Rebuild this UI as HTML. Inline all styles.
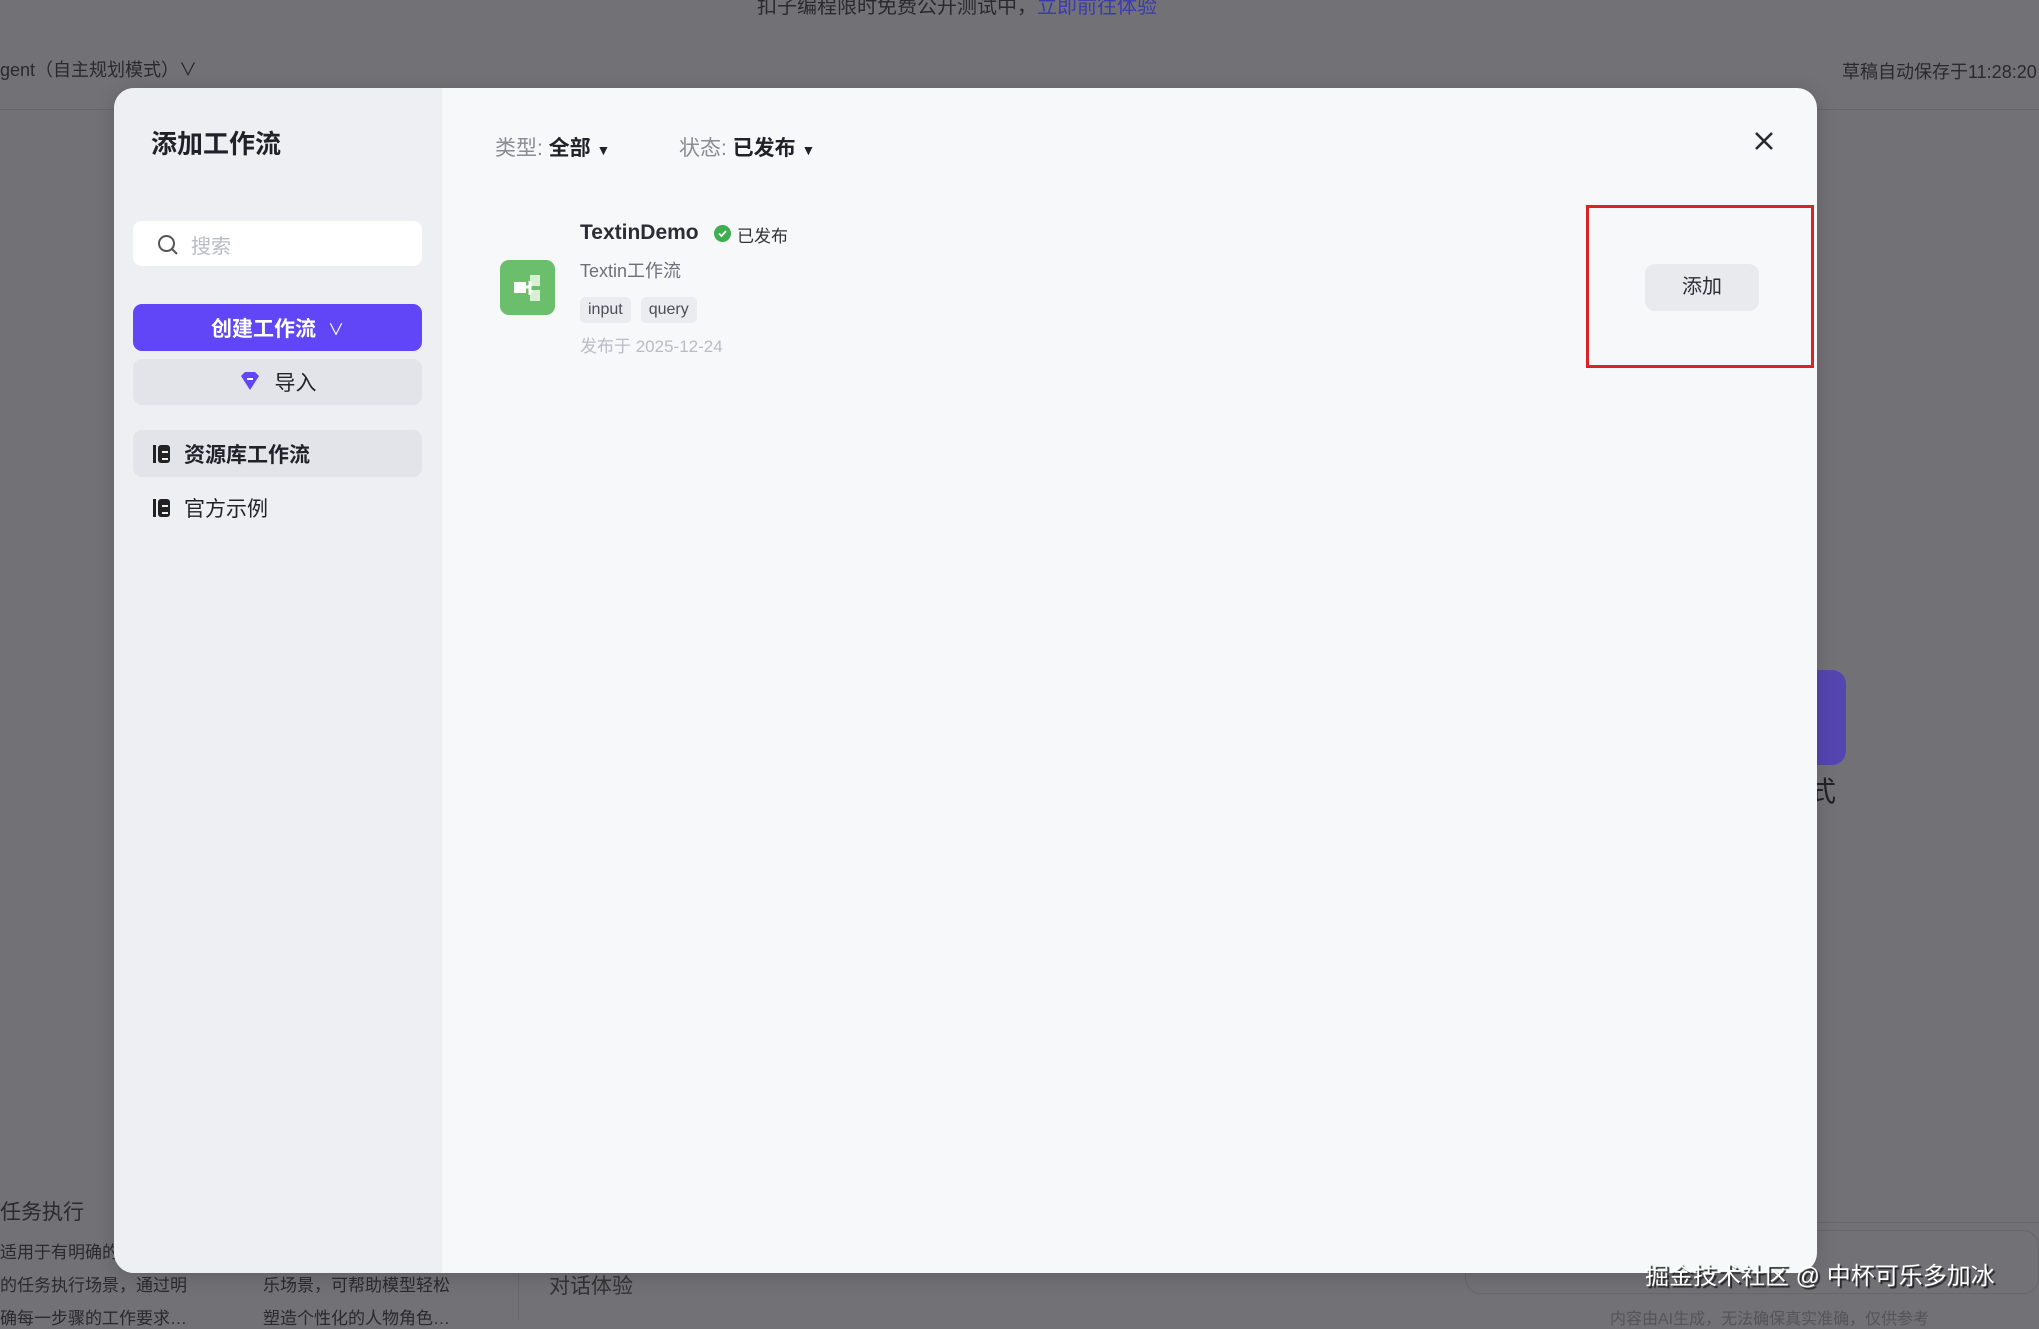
<!DOCTYPE html>
<html><head><meta charset="utf-8"><style>
*{box-sizing:border-box;margin:0;padding:0}
body{width:2039px;height:1320px;overflow:hidden;background:#717176;font-family:"Liberation Sans","Noto Sans CJK SC",sans-serif;position:relative;color:#1f2329}
.abs{position:absolute;white-space:nowrap}
.modal{position:absolute;left:114px;top:88px;width:1703px;height:1185px;border-radius:20px;overflow:hidden;background:#f7f8fa;box-shadow:0 4px 20px rgba(0,0,0,.15)}
.side{position:absolute;left:0;top:0;width:328px;height:100%;background:#eeeff2}
.btn{position:absolute;left:19px;width:289px;border-radius:9px;display:flex;align-items:center;justify-content:center;font-size:21px}
.nav{position:absolute;left:19px;width:289px;height:47px;border-radius:9px;display:flex;align-items:center;padding-left:20px;font-size:21px;color:#1f2329}
.nav i{display:inline-block;width:17px;height:18px;border-left:3px solid #222;margin-right:14px;position:relative}
.nav i:after{content:"";position:absolute;left:2px;top:0;width:12px;height:18px;background:#222;border-radius:3px}
.nav i:before{content:"";position:absolute;left:6px;top:6px;width:6px;height:5px;border-top:2px solid #eee;border-bottom:2px solid #eee;z-index:2}
.tag{display:inline-block;height:26px;line-height:26px;padding:0 8px;background:#ebecef;border-radius:5px;font-size:16px;color:#4a4f57;margin-right:10px}
</style></head><body>
<div class="abs" style="left:757px;top:-10px;font-size:20px;color:#2a2a2e">扣子编程限时免费公开测试中，<span style="color:#3b3bb0">立即前往体验</span></div>
<div class="abs" style="left:0;top:56px;font-size:18px;color:#2a2a2e">gent（自主规划模式）∨</div>
<div class="abs" style="left:1842px;top:58px;font-size:18px;color:#2a2a2e">草稿自动保存于11:28:20</div>
<div class="abs" style="left:0;top:109px;width:2039px;height:1px;background:#66666a"></div>
<div class="abs" style="left:1790px;top:670px;width:56px;height:95px;border-radius:14px;background:#5545b0"></div>
<div class="abs" style="left:1808px;top:770px;font-size:28px;color:#222">式</div>
<div class="abs" style="left:0;top:1196px;font-size:21px;color:#2a2a2e">任务执行</div>
<div class="abs" style="left:0;top:1238px;font-size:17px;color:#2a2a2e">适用于有明确的</div>
<div class="abs" style="left:0;top:1271px;font-size:17px;color:#2a2a2e">的任务执行场景，通过明</div>
<div class="abs" style="left:0;top:1304px;font-size:17px;color:#2a2a2e">确每一步骤的工作要求…</div>
<div class="abs" style="left:263px;top:1271px;font-size:17px;color:#2a2a2e">乐场景，可帮助模型轻松</div>
<div class="abs" style="left:263px;top:1304px;font-size:17px;color:#2a2a2e">塑造个性化的人物角色…</div>
<div class="abs" style="left:518px;top:1260px;width:1px;height:60px;background:#67676b"></div>
<div class="abs" style="left:549px;top:1270px;font-size:21px;color:#333">对话体验</div>
<div class="abs" style="left:1350px;top:1222px;width:689px;height:1px;background:#67676b"></div>
<div class="abs" style="left:1465px;top:1230px;width:574px;height:64px;border:1px solid #67676b;border-radius:16px"></div>
<div class="abs" style="left:1610px;top:1305px;font-size:16px;color:#555">内容由AI生成，无法确保真实准确，仅供参考</div>

<div class="modal">
 <div class="side">
  <div class="abs" style="left:37px;top:36px;font-size:26px;font-weight:bold">添加工作流</div>
  <div class="abs" style="left:19px;top:133px;width:289px;height:45px;background:#fff;border-radius:9px;font-size:20px;color:#b8bcc4;padding:9px 0 0 58px">搜索
   <svg style="position:absolute;left:24px;top:13px" width="22" height="22" viewBox="0 0 22 22"><circle cx="9.5" cy="9.5" r="7.5" fill="none" stroke="#555" stroke-width="2"/><path d="M15 15l5 5" stroke="#555" stroke-width="2"/></svg></div>
  <div class="btn" style="top:216px;height:47px;background:#6046f6;color:#fff;font-weight:bold">创建工作流 <span style="font-weight:normal;font-size:16px;margin-left:12px">∨</span></div>
  <div class="btn" style="top:271px;height:46px;background:#e3e4e9;color:#1f2329"><svg width="22" height="22" viewBox="0 0 22 22" style="margin-right:14px"><path d="M2 5l4-4h10l4 4-9 14z" fill="#6046f6"/><path d="M8 8h6" stroke="#fff" stroke-width="2"/></svg>导入</div>
  <div class="nav" style="top:342px;background:#e3e4e9;font-weight:bold"><i></i>资源库工作流</div>
  <div class="nav" style="top:396px"><i></i>官方示例</div>
 </div>
 <div class="abs" style="left:381px;top:44px;font-size:21px;color:#888c94">类型: <b style="color:#1f2329">全部</b> <span style="color:#1f2329;font-size:14px">▼</span></div>
 <div class="abs" style="left:565px;top:44px;font-size:21px;color:#888c94">状态: <b style="color:#1f2329">已发布</b> <span style="color:#1f2329;font-size:14px">▼</span></div>
 <svg class="abs" style="left:1640px;top:43px" width="20" height="20" viewBox="0 0 20 20"><path d="M2 2l16 16M18 2L2 18" stroke="#2a2a2e" stroke-width="2.6"/></svg>
 <div class="abs" style="left:386px;top:172px;width:55px;height:55px;border-radius:9px;background:#6bbe6b">
  <svg width="55" height="55" viewBox="0 0 55 55"><rect x="14" y="22" width="12" height="11" fill="#fff"/><rect x="30" y="15" width="10" height="11" fill="#d8efd4"/><rect x="30" y="30" width="10" height="11" fill="#d8efd4"/><path d="M26 27h4M30 21v14" stroke="#fff" stroke-width="3"/></svg></div>
 <div class="abs" style="left:466px;top:133px;font-size:21px;font-weight:bold;color:#2a2e36">TextinDemo</div>
 <div class="abs" style="left:600px;top:137px;width:17px;height:17px;border-radius:50%;background:#3fae51"><svg width="17" height="17" viewBox="0 0 17 17"><path d="M5 8.5l2.5 2.5 4.5-5" fill="none" stroke="#fff" stroke-width="1.8"/></svg></div>
 <div class="abs" style="left:623px;top:134px;font-size:17px;color:#333">已发布</div>
 <div class="abs" style="left:466px;top:169px;font-size:18px;color:#6b7079">Textin工作流</div>
 <div class="abs" style="left:466px;top:209px"><span class="tag">input</span><span class="tag">query</span></div>
 <div class="abs" style="left:466px;top:244px;font-size:17px;color:#b8bcc4">发布于 2025-12-24</div>
 <div class="abs" style="left:1531px;top:176px;width:114px;height:47px;border-radius:10px;background:#e9eaee;font-size:20px;color:#2a2e36;text-align:center;line-height:47px">添加</div>
</div>
<div class="abs" style="left:1586px;top:205px;width:228px;height:163px;border:3px solid #d9232a"></div>
<div class="abs" style="left:1645px;top:1256px;font-size:24px;color:#fff;text-shadow:2px 2px 1px #222">掘金技术社区 @ 中杯可乐多加冰</div>
</body></html>
